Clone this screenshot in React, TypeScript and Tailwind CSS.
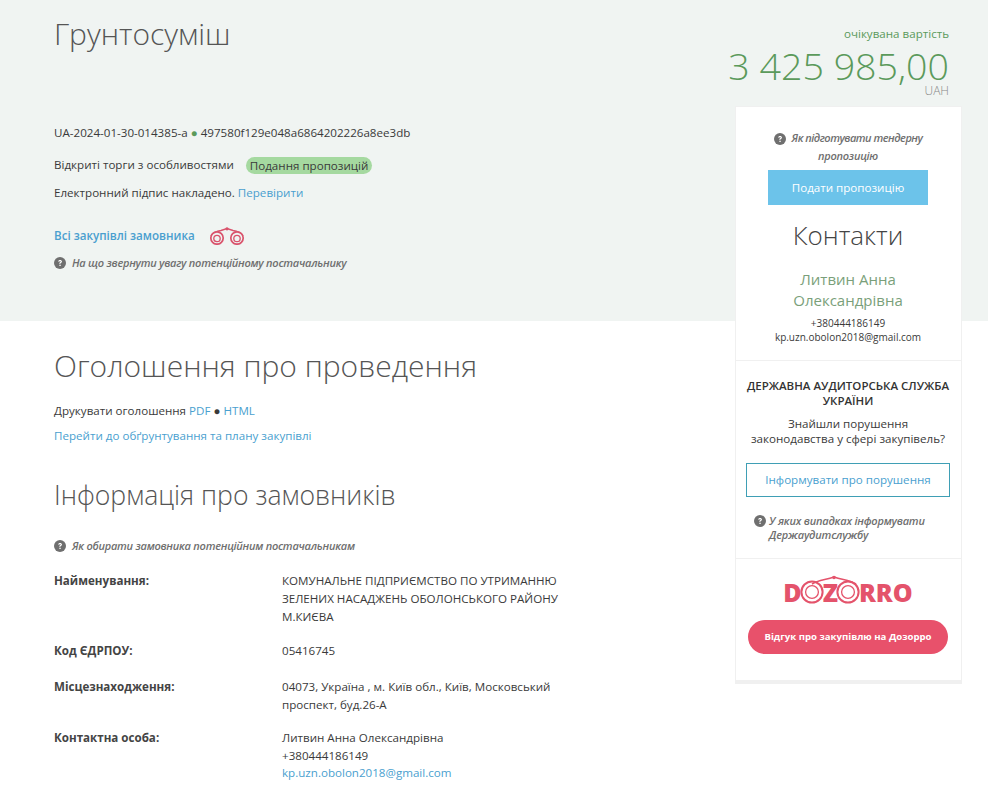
import React from "react";

const Help = ({ className = "" }: { className?: string }) => (
  <svg viewBox="0 0 24 24" className={`w-[12px] h-[12px] shrink-0 ${className}`}>
    <circle cx="12" cy="12" r="12" fill="#6f6f6f" />
    <path
      d="M8.2 9.2c.2-2.2 1.8-3.4 3.9-3.4 2.2 0 3.8 1.3 3.8 3.2 0 1.5-.9 2.2-1.9 2.9-.8.5-1.1.9-1.1 1.8h-2.4c0-1.7.5-2.4 1.6-3.2.8-.6 1.3-.9 1.3-1.5 0-.7-.6-1.1-1.3-1.1-.8 0-1.4.5-1.5 1.4z"
      fill="#fff"
    />
    <rect x="10.8" y="15.4" width="2.6" height="2.6" fill="#fff" />
  </svg>
);

const Binoculars = () => (
  <svg viewBox="0 0 36 18" className="h-[18px] w-[36px]" fill="none" stroke="#d9536c">
    <path d="M2 9 C4 6 8 4 12 3.5 L18 1.5 L24 3.5 C28 4 32 6 34 9" strokeWidth="1.4" />
    <circle cx="8" cy="11" r="6.2" strokeWidth="1.7" fill="#f0f4f2" />
    <circle cx="8" cy="11.5" r="3.2" strokeWidth="1.3" />
    <circle cx="28" cy="11" r="6.2" strokeWidth="1.7" fill="#f0f4f2" />
    <circle cx="28" cy="11.5" r="3.2" strokeWidth="1.3" />
    <circle cx="18" cy="1.8" r="1.6" fill="#d9536c" stroke="none" />
  </svg>
);

const Ring = () => (
  <svg viewBox="0 0 24 24" className="mx-[-1.5px] h-[24px] w-[24px]" fill="none" stroke="#e4536b">
    <circle cx="12" cy="12" r="10.6" strokeWidth="2" />
    <circle cx="12" cy="12" r="6.4" strokeWidth="1.3" />
  </svg>
);

const infoRows = [
  {
    label: "Найменування:",
    value: ["КОМУНАЛЬНЕ ПІДПРИЄМСТВО ПО УТРИМАННЮ", "ЗЕЛЕНИХ НАСАДЖЕНЬ ОБОЛОНСЬКОГО РАЙОНУ", "М.КИЄВА"],
  },
  { label: "Код ЄДРПОУ:", value: ["05416745"] },
  { label: "Місцезнаходження:", value: ["04073, Україна , м. Київ обл., Київ, Московський", "проспект, буд.26-А"] },
  { label: "Контактна особа:", value: ["Литвин Анна Олександрівна", "+380444186149"], email: "kp.uzn.obolon2018@gmail.com" },
];

export default function App() {
  return (
    <div
      className="relative h-[791px] w-[988px] overflow-hidden bg-white text-[11.6px] text-[#3a3a3a]"
      style={{ fontFamily: '"Open Sans", sans-serif' }}
    >
      <div className="absolute inset-x-0 top-0 h-[321px] bg-[#f0f4f2]" />
      <div className="relative flex">
        {/* left column */}
        <div className="w-[735px] pl-[54px]">
          <h1 className="mt-[13px] text-[30px] leading-[42px] font-light text-[#555]">Грунтосуміш</h1>
          <div className="mt-[69px] leading-[18px]">
            UA-2024-01-30-014385-a <span className="text-[#5b9a5b]">●</span> 497580f129e048a6864202226a8ee3db
          </div>
          <div className="mt-[14px] flex items-center leading-[18px]">
            Відкриті торги з особливостями
            <span className="ml-[12px] rounded-full bg-[#a5d9a0] px-[4px] leading-[17px]">Подання пропозицій</span>
          </div>
          <div className="mt-[10px] leading-[18px]">
            Електронний підпис накладено. <a className="text-[#4a9fcf]">Перевірити</a>
          </div>
          <div className="mt-[25px] flex items-center">
            <a className="font-semibold text-[#4a9fcf]">Всі закупівлі замовника</a>
            <span className="ml-[14px] flex">
              <Binoculars />
            </span>
          </div>
          <div className="mt-[10px] flex items-center gap-[6px] text-[11px] font-semibold tracking-[-0.25px] text-[#6f6f6f] italic">
            <Help />
            На що звернути увагу потенційному постачальнику
          </div>

          <h2 className="mt-[75px] text-[30px] leading-[38px] font-light text-[#555]">Оголошення про проведення</h2>
          <div className="mt-[17px] leading-[18px]">
            Друкувати оголошення <a className="text-[#4a9fcf]">PDF</a> ● <a className="text-[#4a9fcf]">HTML</a>
          </div>
          <div className="mt-[7px] leading-[18px]">
            <a className="text-[#4a9fcf]">Перейти до обґрунтування та плану закупівлі</a>
          </div>

          <h2 className="mt-[31px] text-[26.6px] leading-[38px] font-light text-[#555]">Інформація про замовників</h2>
          <div className="mt-[24px] flex items-center gap-[6px] text-[11px] font-semibold tracking-[-0.25px] text-[#6f6f6f] italic">
            <Help />
            Як обирати замовника потенційним постачальникам
          </div>
          <div className="mt-[18px] flex flex-col gap-[16px]">
            {infoRows.map((row) => (
              <div key={row.label} className="flex leading-[18px] [&:nth-child(2)]:mb-[2px] [&:nth-child(3)]:mb-[-1px]">
                <div className="w-[228px] font-bold text-[#444]">{row.label}</div>
                <div className="w-[300px]">
                  {row.value.map((line) => (
                    <div key={line} className="whitespace-nowrap">
                      {line}
                    </div>
                  ))}
                  {row.email && <a className="-mt-[1px] block text-[#4a9fcf]">{row.email}</a>}
                </div>
              </div>
            ))}
          </div>
        </div>

        {/* right column */}
        <div className="w-[227px]">
          <div className="mt-[26px] pr-[13px] text-right text-[#5b9a5b]">
            <div className="leading-[16px]">очікувана вартість</div>
            <div className="mt-[6px] -ml-[20px] text-[37.6px] leading-[36px] font-light whitespace-nowrap">
              3 425 985,00
            </div>
            <div className="text-[12px] leading-[14px] font-light text-[#888]">UAH</div>
          </div>
          <div className="mt-[8px] w-[227px] border border-b-4 border-[#f0f0f0] bg-white">
            <div className="pt-[22px] pr-[33px] pl-[32px] text-center">
              <div className="text-[11px] leading-[18px] font-semibold tracking-[-0.25px] text-[#6f6f6f] italic">
                <span className="whitespace-nowrap tracking-[-0.5px]">
                  <Help className="mr-[6px] mb-[1px] inline-block" />
                  Як підготувати тендерну
                </span>{" "}
                пропозицію
              </div>
              <button className="mt-[5px] h-[35px] w-[160px] bg-[#6cc3ea] text-white">Подати пропозицію</button>
              <div className="mt-[10px] text-[26px] leading-[40px] font-light text-[#444]">Контакти</div>
              <div className="mt-[14px] text-[15px] leading-[21px] text-[#7a9f7a]">Литвин Анна Олександрівна</div>
              <div className="mt-[5px] text-[10px] leading-[14px]">
                +380444186149
                <br />
                kp.uzn.obolon2018@gmail.com
              </div>
            </div>
            <div className="mt-[16px] border-t border-[#f0f0f0] pt-[17px] pr-[11px] pl-[10px] text-center">
              <div className="text-[11.5px] leading-[15px] font-semibold text-[#333]">
                ДЕРЖАВНА АУДИТОРСЬКА СЛУЖБА УКРАЇНИ
              </div>
              <div className="mt-[8px] leading-[15px]">
                Знайшли порушення
                <br />
                законодавства у сфері закупівель?
              </div>
              <button className="mt-[17px] h-[34px] w-[204px] border border-[#3f9fb5] text-[#4a9fcf]">
                Інформувати про порушення
              </button>
              <div className="mt-[17px] flex gap-[3px] pl-[8px] text-left text-[11px] leading-[14px] font-semibold tracking-[-0.2px] text-[#6f6f6f] italic">
                <Help className="mt-[1px]" />
                <span>
                  У яких випадках інформувати
                  <br />
                  Держаудитслужбу
                </span>
              </div>
            </div>
            <div className="mt-[16px] border-t border-[#f0f0f0] pt-[18px] pb-[26px]">
              <div className="relative flex h-[30px] items-center justify-center pr-[1px] text-[25px] leading-none font-extrabold text-[#e4536b]">
                <span>D</span>
                <Ring />
                <span>Z</span>
                <Ring />
                <span>RRO</span>
                <svg
                  viewBox="0 0 56 10"
                  className="absolute top-[-2px] left-[70px] h-[10px] w-[56px]"
                  fill="none"
                  stroke="#e4536b"
                  strokeWidth="1.6"
                >
                  <path d="M6 9 C12 5 19 5 28 2 C37 5 44 5 50 9" />
                  <circle cx="28" cy="2.5" r="1.8" fill="#e4536b" stroke="none" />
                </svg>
              </div>
              <button className="mt-[13px] ml-[12px] block h-[34px] w-[200px] rounded-full bg-[#e8516b] text-[9.6px] font-bold text-white">
                Відгук про закупівлю на Дозорро
              </button>
            </div>
          </div>
        </div>
      </div>
    </div>
  );
}
